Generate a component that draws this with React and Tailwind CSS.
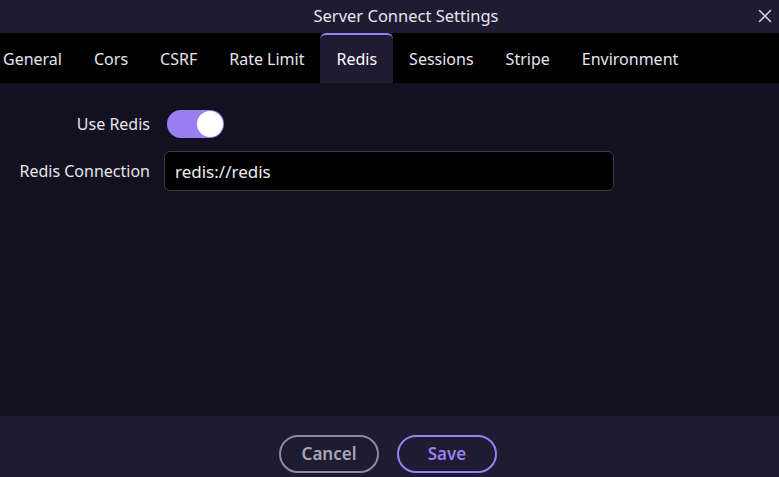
import React, { useState } from 'react';
import { X } from 'lucide-react';

const tabs = ['General', 'Cors', 'CSRF', 'Rate Limit', 'Redis', 'Sessions', 'Stripe', 'Environment'];

const Toggle = ({ checked, onChange }) => (
  <button
    type="button"
    onClick={() => onChange(!checked)}
    className={`relative block h-[28px] w-[57px] rounded-full ${checked ? 'bg-[#9b7ef0]' : 'bg-[#3a3650]'}`}
  >
    <span
      className={`absolute top-[1px] h-[26px] w-[26px] rounded-full bg-white ${checked ? 'right-[1px]' : 'left-[1px]'}`}
    />
  </button>
);

const App = () => {
  const [activeTab, setActiveTab] = useState('Redis');
  const [useRedis, setUseRedis] = useState(true);
  const [connection, setConnection] = useState('redis://redis');

  return (
    <div
      className="flex h-[477px] w-[779px] flex-col bg-[#13111f] text-white"
      style={{ fontFamily: '"Noto Sans", "Open Sans", sans-serif' }}
    >
      {/* Title bar */}
      <div className="relative flex h-[33px] items-center justify-center bg-[#1f1b33]">
        <span className="pl-[33px] text-[16.5px] text-[#e6e4ee]">Server Connect Settings</span>
        <button type="button" className="absolute right-[3px] top-[5px] text-[#d8d6e0]">
          <X className="h-[22px] w-[22px]" strokeWidth={1.6} />
        </button>
      </div>

      {/* Tabs */}
      <div className="flex h-[50px] items-stretch bg-black">
        {tabs.map(tab => {
          const active = tab === activeTab;
          return (
            <button
              key={tab}
              type="button"
              onClick={() => setActiveTab(tab)}
              className={`flex items-center px-[16px] text-[16px] first:pl-[3px] ${
                active
                  ? 'rounded-t-[6px] border-t-2 border-[#9b7ef0] bg-[#1f1b33] text-white'
                  : 'border-t-2 border-transparent text-[#e6e4ee]'
              }`}
            >
              {tab}
            </button>
          );
        })}
      </div>

      {/* Content */}
      <div className="flex flex-1 flex-col gap-[13px] pt-[27px]">
        <div className="flex items-center">
          <label className="w-[151px] pr-[1px] text-right text-[16px] text-[#e6e4ee]">Use Redis</label>
          <div className="flex pl-[16px]">
            <Toggle checked={useRedis} onChange={setUseRedis} />
          </div>
        </div>
        <div className="flex items-center">
          <label className="w-[151px] pr-[1px] text-right text-[16px] text-[#e6e4ee]">Redis Connection</label>
          <input
            value={connection}
            onChange={e => setConnection(e.target.value)}
            className="ml-[13px] h-[40px] w-[450px] rounded-[6px] border border-[#3b3947] bg-black px-[10px] text-[17px] text-[#eeeef2] outline-none"
          />
        </div>
      </div>

      {/* Footer */}
      <div className="flex h-[61px] items-start justify-center gap-[18px] bg-[#1f1b33] pr-[3px] pt-[19px]">
        <button
          type="button"
          className="h-[38px] w-[100px] rounded-full border-2 border-[#8e8b99] text-[17px] font-semibold text-[#a9a6b4]"
        >
          Cancel
        </button>
        <button
          type="button"
          className="h-[38px] w-[100px] rounded-full border-2 border-[#9b7ef0] text-[17px] font-semibold text-[#9b7ef0]"
        >
          Save
        </button>
      </div>
    </div>
  );
};

export default App;
